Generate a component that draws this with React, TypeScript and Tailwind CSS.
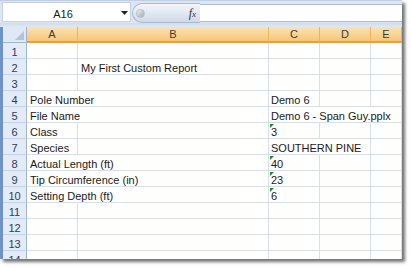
import React from "react";

type Row = {
  n: number;
  A?: string;
  B?: string;
  C?: string;
  tri?: boolean;
  hide?: string[];
};

const rows: Row[] = [
  { n: 1 },
  { n: 2, B: "My First Custom Report" },
  { n: 3 },
  { n: 4, A: "Pole Number", C: "Demo 6", hide: ["A"] },
  { n: 5, A: "File Name", C: "Demo 6 - Span Guy.pplx", hide: ["A", "C", "D"] },
  { n: 6, A: "Class", C: "3", tri: true },
  { n: 7, A: "Species", C: "SOUTHERN PINE", hide: ["C"] },
  { n: 8, A: "Actual Length (ft)", C: "40", tri: true, hide: ["A"] },
  { n: 9, A: "Tip Circumference (in)", C: "23", tri: true, hide: ["A"] },
  { n: 10, A: "Setting Depth (ft)", C: "6", tri: true, hide: ["A"] },
  { n: 11 },
  { n: 12 },
  { n: 13 },
  { n: 14 },
];

const font = { fontFamily: '"Liberation Sans", Arial, sans-serif' };

function Tri() {
  return (
    <svg className="absolute left-px top-px" width="4" height="4" viewBox="0 0 4 4">
      <polygon points="0,0 4,0 0,4" fill="#1d8a2a" />
    </svg>
  );
}

function Cell({
  text,
  hidden,
  pad,
  tri,
}: {
  text?: string;
  hidden?: boolean;
  pad: string;
  tri?: boolean;
}) {
  return (
    <div
      className={
        "relative h-[16px] border-b border-b-[#d8dfea] border-r whitespace-nowrap text-[11px] leading-[16px] pt-px text-[#1a1a1a] " +
        (hidden ? "border-r-transparent " : "border-r-[#d8dfea] ") +
        pad
      }
    >
      {tri && <Tri />}
      {text}
    </div>
  );
}

export default function App() {
  return (
    <div className="w-[411px] h-[268px] bg-white overflow-hidden" style={font}>
      <div className="w-[402px] h-[259px] overflow-hidden flex flex-col bg-white shadow-[3px_3px_3px_rgba(0,0,0,0.55)]">
        {/* formula bar */}
        <div className="h-[23px] shrink-0 flex bg-[#dce6f2] border-t border-[#c3d0e2]">
          <div className="ml-[2px] mt-px mb-[1px] w-[129px] bg-white border border-[#c5d2e3] flex items-center">
            <div className="flex-1 text-center text-[11px] leading-none pt-[5px] pl-[2px] text-[#1a1a1a]">A16</div>
            <svg width="7" height="4" viewBox="0 0 7 4" className="mr-[2px] mt-[2px]">
              <polygon points="0,0 7,0 3.5,4" fill="#222" />
            </svg>
          </div>
          <div className="mt-[2px] ml-[1px] w-[68px] h-[20px] rounded-l-full bg-gradient-to-b from-[#f4f7fb] to-[#cfd9e7] border border-[#a9b9cf] border-r-0 flex items-center">
            <div className="ml-[3px] w-[9px] h-[9px] rounded-full bg-gradient-to-br from-[#f2f4f7] to-[#9ea9b8] border border-[#b5bfcc]" />
            <div className="flex-1" />
            <span
              className="mr-[4px] text-[12px] italic text-[#333] leading-none"
              style={{ fontFamily: '"Liberation Serif", serif' }}
            >
              f<span className="text-[9px]">x</span>
            </span>
          </div>
          <div className="mt-[3px] mb-[1px] flex-1 bg-white border-t border-b border-[#a9bcd6]" />
        </div>
        <div className="h-[4px] shrink-0 bg-gradient-to-b from-[#cfdcec] to-[#dfe8f4]" />
        {/* sheet */}
        <div className="shrink-0 flex flex-col border-l-[3px] border-l-[#6f93c8]">
          <div className="h-[16px] grid grid-cols-[24px_51px_191px_51px_51px_1fr] text-[11px] text-[#3a3a3a]">
            <div className="relative bg-[#dfe8f5] border-r border-b border-[#9eb6ce]">
              <svg className="absolute right-[2px] bottom-[2px]" width="9" height="9" viewBox="0 0 9 9">
                <polygon points="9,0 9,9 0,9" fill="#b3c3d9" />
              </svg>
            </div>
            {["A", "B", "C", "D", "E"].map((c) => (
              <div
                key={c}
                className="bg-gradient-to-b from-[#fbe2b3] to-[#f6c676] border-r border-r-[#eeb25f] border-b-2 border-b-[#f29b3a] flex items-center justify-center leading-none pt-px"
              >
                {c}
              </div>
            ))}
          </div>
          {rows.map((r) => {
            const h = r.hide || [];
            return (
              <div key={r.n} className="grid grid-cols-[24px_51px_191px_51px_51px_1fr]">
                <div className="h-[16px] bg-[#e3ebf6] border-r border-r-[#9eb6ce] border-b border-b-[#c3d3e7] text-center text-[11px] leading-[16px] pt-px text-[#27405f]">
                  {r.n}
                </div>
                <Cell text={r.A} hidden={h.includes("A")} pad="pl-[3px]" />
                <Cell text={r.B} hidden={h.includes("B")} pad="pl-[3px]" />
                <Cell text={r.C} hidden={h.includes("C")} pad="pl-[2px]" tri={r.tri} />
                <Cell hidden={h.includes("D")} pad="" />
                <Cell pad="" />
              </div>
            );
          })}
        </div>
      </div>
    </div>
  );
}
